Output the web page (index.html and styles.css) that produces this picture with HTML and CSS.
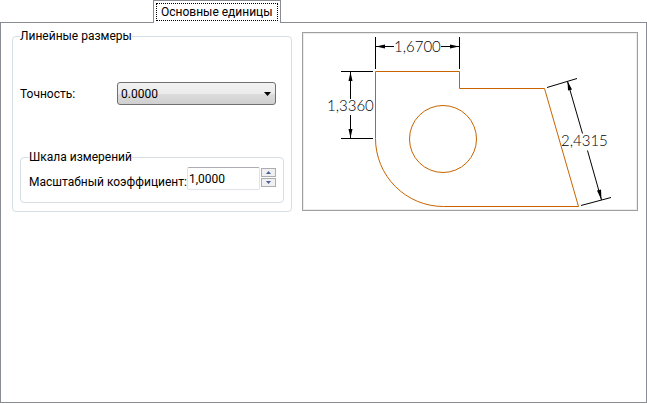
FILE: index.html
```html
<!DOCTYPE html>
<html lang="ru">
<head>
<meta charset="utf-8">
<title>Основные единицы</title>
<link rel="stylesheet" href="styles.css">
</head>
<body>
<div class="tabs" role="tablist">
  <button class="tab" type="button" role="tab" id="tab-units" aria-selected="true" aria-controls="panel-units"><span class="tab-label">Основные единицы</span></button>
</div>
<main class="panel" role="tabpanel" id="panel-units" aria-labelledby="tab-units">
  <fieldset class="group">
    <legend>Линейные размеры</legend>
    <div class="row">
      <label class="row-label" for="precision">Точность:</label>
      <div class="select-wrap">
        <select class="select" id="precision"><option>0.0000</option></select>
        <svg class="select-arrow" width="7" height="4" viewBox="0 0 7 4" aria-hidden="true"><path d="M0 0h7L3.500 4z"/></svg>
      </div>
    </div>
    <fieldset class="group group-inner">
      <legend>Шкала измерений</legend>
      <div class="scale">
        <label class="scale-label" for="factor">Масштабный коэффициент:</label>
        <input class="factor" id="factor" type="text" value="1,0000">
        <div class="spin">
          <button class="spin-button" type="button" aria-label="Увеличить"><svg width="5" height="3" viewBox="0 0 5 3"><path d="M0 3L2.500 0L5 3z"/></svg></button>
          <button class="spin-button" type="button" aria-label="Уменьшить"><svg width="5" height="3" viewBox="0 0 5 3"><path d="M0 0L2.500 3L5 0z"/></svg></button>
        </div>
      </div>
    </fieldset>
  </fieldset>
  <div class="preview">
    <svg class="drawing" viewBox="304 34 332 175" role="img" aria-label="Образец размеров">
      <g class="part">
        <path d="M375.500 71.500H459.500V88.500H544.500L578.500 206.500H443.500A68 68 0 0 1 375.500 138.500Z"/>
        <circle cx="443" cy="139" r="33.500"/>
      </g>
      <g class="dim">
        <path d="M375.500 37V69M459.500 37V69M376 46.500H394M441 46.500H459"/>
        <path d="M341 71.500H373M341 138.500H373M350.500 72V99M350.500 115V138"/>
        <path d="M547 87.500L577 78.500M581 205.500L611 197.500M567.500 81.500L582.500 133.500M587.500 150.500L601.500 200"/>
      </g>
      <g class="arrow">
        <path d="M376 46.500L385 44.500V48.500ZM459 46.500L450 44.500V48.500Z"/>
        <path d="M350.500 72L348.500 81H352.500ZM350.500 138L348.500 129H352.500Z"/>
        <path d="M567.500 81L568 90.500L572 89.500ZM601.500 200L597 190.500L601 189.500Z"/>
      </g>
      <g class="value">
        <text x="394" y="52">1,6700</text>
        <text x="327" y="111">1,3360</text>
        <text x="561" y="146">2,4315</text>
      </g>
    </svg>
  </div>
</main>
</body>
</html>
```
FILE: styles.css
```css
* { box-sizing: border-box; }
body {
  margin: 0;
  height: 100vh;
  display: flex;
  flex-direction: column;
  background: #fff;
  color: #000;
  font: 12px/16px Roboto, "Open Sans", sans-serif;
  padding-bottom: 1px;
}
button, input, select { font: inherit; color: inherit; margin: 0; }
.tabs { display: flex; padding-left: 153px; }
.tab {
  height: 23px;
  margin-bottom: -1px;
  padding: 2px;
  border: 1px solid #898c95;
  border-bottom: 0;
  background: #fff;
  z-index: 1;
}
.tab-label {
  display: block;
  height: 18px;
  padding: 0 4px;
  border: 1px dotted #000;
}
.panel {
  flex: 1;
  display: flex;
  align-items: flex-start;
  gap: 10px;
  padding: 5px 8px 8px 11px;
  border: 1px solid #898c95;
}
.group {
  flex: 0 0 280px;
  min-width: 0;
  margin: 0;
  padding: 38px 7px 8px;
  border: 1px solid #d5dfe5;
  border-radius: 4px;
}
.group legend { padding: 0; }
.row { display: flex; align-items: center; margin-bottom: 44px; }
.row-label { flex: 0 0 97px; }
.select-wrap { position: relative; width: 159px; }
.select {
  display: block;
  appearance: none;
  width: 100%;
  height: 23px;
  padding: 0 3px;
  border: 1px solid #707070;
  border-radius: 3px;
  background: linear-gradient(#f2f2f2, #ebebeb 50%, #dddddd 50%, #cfcfcf);
}
.select-arrow { position: absolute; right: 5px; top: 10px; }
.group-inner { padding: 2px 8px 12px; }
.scale { display: flex; align-items: flex-start; }
.scale-label { flex: none; padding-top: 7px; white-space: nowrap; }
.factor {
  width: 73px;
  height: 23px;
  padding: 0 1px;
  border: 1px solid #e2e3ea;
  border-top-color: #abadb3;
  border-radius: 2px;
  background: #fff;
}
.spin { display: grid; gap: 1px; margin: 1px 0 0 1px; }
.spin-button {
  display: grid;
  place-items: center;
  width: 15px;
  height: 9px;
  padding: 0;
  border: 1px solid #abadb3;
  background: #f0f0f0;
  fill: #4b5fa0;
}
.preview {
  flex: 1;
  margin-top: 4px;
  border: 1px solid #a0a0a0;
  padding: 1px;
  box-shadow: inset 0 0 0 1px #ececec;
}
.drawing { display: block; width: 100%; }
.part { fill: none; stroke: #c86400; }
.dim { fill: none; stroke: #000; }
.arrow { fill: #000; }
.value { font: 300 15px Lato, "Open Sans", sans-serif; }
```
